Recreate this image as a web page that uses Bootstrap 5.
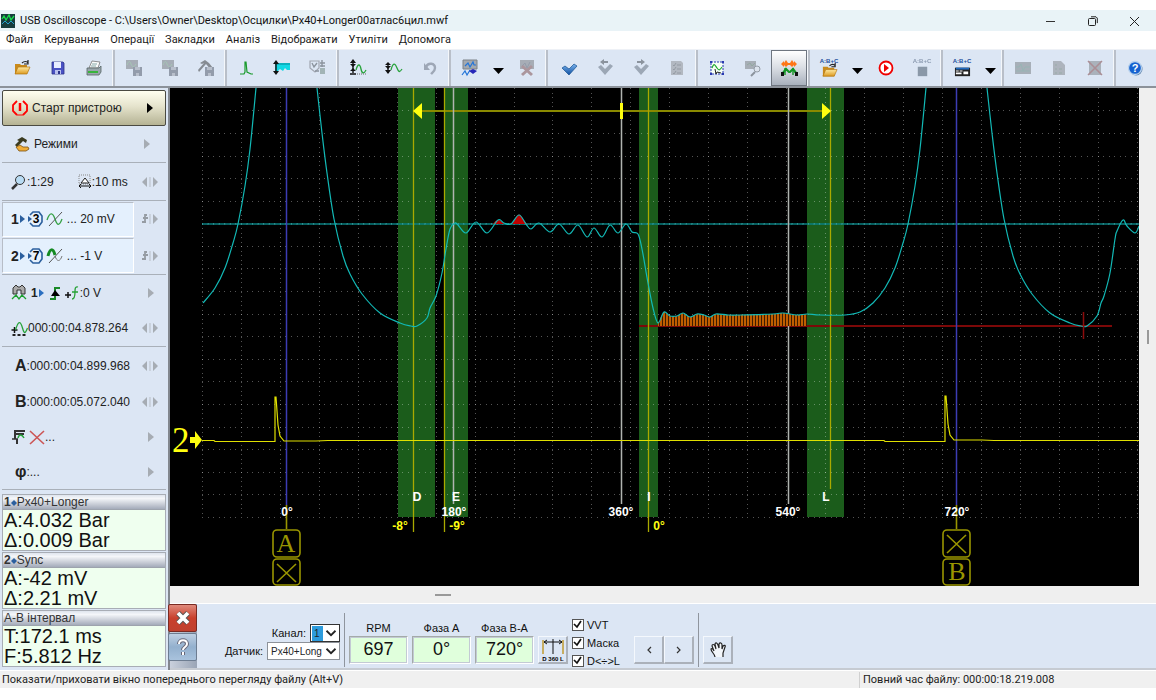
<!DOCTYPE html>
<html lang="uk">
<head>
<meta charset="utf-8">
<meta name="viewport" content="width=device-width, initial-scale=1">
<title>USB Oscilloscope</title>
<link href="https://cdn.jsdelivr.net/npm/bootstrap@5.3.0/dist/css/bootstrap.min.css" rel="stylesheet">
<style>
  :root { --panel:#dce6f4; --line:#a9b0b9; }
  body { background:#fff; color:#111; font-family:"Liberation Sans",sans-serif; font-size:12px; line-height:16px; padding-top:10px; }
  .ui-font { font-family:Roboto,"Noto Sans",sans-serif; }
  .titlebar { background:#e9f3f7; height:21px; font-size:11px; }
  .titlebar button { width:42px; height:21px; }
  .menubar { height:18px; font-size:11px; padding-left:6px; gap:11px; }
  .menubar a { color:#1b1b1b; text-decoration:none; }
  .flat { border:0; background:none; padding:0; }
  .tools { background:var(--panel); height:39px; border-top:1px solid #eef1f6; border-bottom:2px solid #8c929a; padding-left:4px; }
  .tools .tool { width:36px; height:36px; display:flex; align-items:center; justify-content:center; flex:none; }
  .tools .drop { width:21px; height:36px; display:flex; align-items:center; justify-content:center; padding-top:6px; flex:none; }
  .tools .split { width:4px; height:36px; flex:none; border-left:1px solid #f4f7fb; box-shadow:inset 2px 0 0 #b9bfc9; }
  .tools .split.wide { width:6px; }
  .tool.off { opacity:.5; filter:grayscale(.6); }
  .tool.pressed { border:1px solid #6f7680; background:linear-gradient(#fff,#d9dde3 50%,#a9b1bd); }
  .side { width:170px; flex:none; background:var(--panel); padding:2px 2px 0; border-right:2px solid #82878e; }
  .start { height:35px; border:1px solid #4a4a42; border-radius:2px; background:linear-gradient(#fffff0,#e5e3cc 45%,#b5b394); }
  .line-row { height:36px; padding-left:9px; padding-right:7px; display:flex; align-items:center; width:100%; color:#222; font-size:12px; text-align:left; }
  .line-row.tall { height:38px; }
  .line-row.input-row { height:37px; }
  .line-row.short { height:35px; }
  .line-row .end { margin-left:auto; }
  .line-row .tag { font-size:16px; font-weight:600; }
  .ruled { border-top:1px solid var(--line); }
  .foot-rule { height:5px; }
  .chan { background:#e4f0fd; border:1px solid #fff; border-top-color:#b7bdc7; border-left-color:#b7bdc7; width:132px; height:35px; padding-left:8px; display:flex; align-items:center; }
  .chan b { font-size:14px; }
  .meter { border:1px solid #a8adb5; margin-bottom:1px; background:#efffef; }
  .meter h2 { font-size:12px; line-height:14px; margin:0; color:#333; padding-left:1px; border-bottom:1px solid #9da3ad; background:linear-gradient(#dfe5ee,#f4f6f9 25%,#a4abba); }
  .meter p { margin:0; font-size:20px; line-height:20px; padding-left:1px; color:#111; }
  .strip { background:#efefef; }
  .vstrip { width:17px; flex:none; }
  .hstrip { height:18px; border-bottom:1px solid #fff; padding-left:265px; }
  .grip-h { width:16px; height:2px; background:#999; }
  .grip-v { width:2px; height:14px; background:#999; }
  .scope svg { display:block; width:100%; height:auto; background:#000; }
  .lower { background:var(--panel); height:66px; border-bottom:2px solid #c6cbd2; }
  .corner { width:27px; flex:none; background:linear-gradient(90deg,#c9d0dc,#9aa5b6); }
  .corner button { width:29px; height:28px; padding:0; display:flex; align-items:center; justify-content:center; border:1px solid #6d7d91; border-radius:2px; background:linear-gradient(#bfd0e2,#93b0ce 50%,#a9c3dd); margin-left:-2px; }
  .corner .stop { background:linear-gradient(#e08a7c,#c9402d 50%,#c0412f); border-color:#7a2a22; margin-bottom:1px; }
  .source { font-size:11px; width:135px; }
  .pick { width:auto; border:1px solid #8d9299; border-radius:0; font-size:10px; line-height:15px; height:18px; padding:0 14px 0 3px; background-color:#fff; background-size:12px 12px; background-position:right 2px center; background-image:url("data:image/svg+xml,%3csvg xmlns='http://www.w3.org/2000/svg' viewBox='0 0 16 16'%3e%3cpath fill='none' stroke='%23222' stroke-width='2.4' d='m2 5 6 6 6-6'/%3e%3c/svg%3e"); }
  .pick.narrow { width:30px; border-color:#333; background-image:linear-gradient(#2d9bdc,#2d9bdc),url("data:image/svg+xml,%3csvg xmlns='http://www.w3.org/2000/svg' viewBox='0 0 16 16'%3e%3cpath fill='none' stroke='%23222' stroke-width='2.4' d='m2 5 6 6 6-6'/%3e%3c/svg%3e"); background-size:11px 15px,12px 12px; background-position:1px center,right 2px center; background-repeat:no-repeat; }
  .pick.wide { width:73px; }
  .divide { width:1px; height:54px; background:#8f959e; flex:none; }
  .dial { width:59px; }
  .dial output { display:block; width:59px; height:28px; font-size:18px; line-height:25px; text-align:center; background:#e0ffdc; border:1px solid #a4aaa9; border-right-color:#fff; border-bottom-color:#fff; outline:1px solid #c3cad4; outline-offset:-2px; }
  .dial label { font-size:11px; line-height:15px; display:block; text-align:center; }
  .key { width:30px; height:28px; padding:0; flex:none; border:1px solid #f4f8fd; border-right:2px solid #abb1ba; border-bottom:2px solid #abb1ba; background:var(--panel); display:flex; align-items:center; justify-content:center; }
  .ticks { width:46px; }
  .ticks .form-check { min-height:0; height:18px; margin:0; padding:0; display:flex; align-items:center; gap:3px; font-size:11px; white-space:nowrap; }
  .ticks input.form-check-input { width:12px; height:12px; margin:0; float:none; border:1px solid #555; border-radius:0; background-color:#fff; flex:none; background-size:12px; background-image:url("data:image/svg+xml,%3csvg xmlns='http://www.w3.org/2000/svg' viewBox='0 0 12 12'%3e%3cpath fill='none' stroke='%23111' stroke-width='1.7' d='m2 5 3 3 4-6'/%3e%3c/svg%3e"); }
  .statusbar { background:#f0f0f0; height:17px; font-size:11px; color:#222; margin-top:1px; }
  .statusbar .message { padding-left:2px; }
  .statusbar .total { width:297px; border-left:1px solid #d0d0d0; padding-left:3px; }
</style>
</head>
<body>
<svg class="position-absolute" width="0" height="0">
  <defs>
    <linearGradient id="gold" x2="0" y2="1"><stop stop-color="#ffe9a0"/><stop offset="1" stop-color="#dc9a20"/></linearGradient>
    <linearGradient id="blue" x2="0" y2="1"><stop stop-color="#7bb4ee"/><stop offset="1" stop-color="#0d4ea0"/></linearGradient>
  </defs>
</svg>
<svg class="d-none">
  <symbol id="i-folder" viewBox="0 0 18 18"><path d="M2 5h5l1 1h6v9H2z" fill="#c98a1b"/><path d="M2 15l3-7h12l-3 7z" fill="url(#gold)" stroke="#b37712" stroke-width=".7"/><path d="M9 4c2-2 5-2 6 0M15 1v4h-4" fill="none" stroke="#222" stroke-width="1.2"/></symbol>
  <symbol id="i-disk" viewBox="0 0 18 18"><path d="M3 3h11l1 1v11H3z" fill="#4a52c4" stroke="#2d348a" stroke-width=".8"/><path d="M5 3h7v6H5z" fill="#e8edff"/><path d="M6 11h6v4H6z" fill="#b9c1ee"/><path d="M9 12h2v3H9z" fill="#2d348a"/></symbol>
  <symbol id="i-print" viewBox="0 0 18 18"><path d="M7 2l8 1-2 6H4z" fill="#fafafa" stroke="#777" stroke-width=".8"/><path d="M7 5h5M6 7h5" stroke="#8aa"/><path d="M2 9h12l2-2v6l-2 3H2z" fill="#9aa6ac" stroke="#566" stroke-width=".8"/><path d="M3 12h10v2H3z" fill="#37b43c"/></symbol>
  <symbol id="i-savesig" viewBox="0 0 18 18"><path d="M1 1h12v9H1z" fill="#6b7680"/><path d="M2 6c2-5 3-4 4-1s3 4 5 0" fill="none" stroke="#3aba49"/><path d="M8 8h9v9H8z" fill="#43557f"/><path d="M10 8h5v3h-5zM11 14h3v3h-3z" fill="#8f9bb0"/></symbol>
  <symbol id="i-savehammer" viewBox="0 0 18 18"><path d="M3 4l5-3 4 3 4 5-2 2-5-6-7 8-1-2 6-7-2 1z" fill="#333"/><path d="M8 8h9v9H8z" fill="#43557f"/><path d="M10 8h5v3h-5zM11 14h3v3h-3z" fill="#8f9bb0"/></symbol>
  <symbol id="i-spike" viewBox="0 0 18 18"><path d="M3 15h4l1-2V3h1l1 10 2 1 2 1h2" fill="none" stroke="#189a2b" stroke-width="1.2"/></symbol>
  <symbol id="i-level" viewBox="0 0 18 18"><path d="M2 4h15v7h-3l-2-2-2 3-3-2-2 2H2z" fill="#12d8e4"/><path d="M2 5h15" stroke="#078a99"/><path d="M3 4v9" stroke="#111" stroke-width="1.4"/><path d="M3 1l3 4H0zM3 16l3-4H0z" fill="#111"/></symbol>
  <symbol id="i-volt" viewBox="0 0 18 18"><path d="M1 2h9v7l-4 4-5-4z" fill="none" stroke="#667" stroke-width="1.2"/><path d="M3 4l2 4 3-4M6 12h4M13 1v7M11 4h5M11 7h5" fill="none" stroke="#345" stroke-width="1.4"/><path d="M11 9h5v6h-5z" fill="#4b8c75"/></symbol>
  <symbol id="i-amp" viewBox="0 0 18 18"><path d="M4 3v11M1 15h6" stroke="#111" stroke-width="1.4"/><path d="M4 0l3 4H1zM4 8L1 5h6zM4 9l3 3H1z" fill="#111"/><path d="M7 11c2-7 4-6 5-1s3 5 5 1" fill="none" stroke="#27a33b" stroke-width="1.3"/><path d="M8 15h9" stroke="#666" stroke-dasharray="1 1"/></symbol>
  <symbol id="i-amp2" viewBox="0 0 18 18"><path d="M3 4v10" stroke="#111" stroke-width="1.4"/><path d="M3 3l3 3H0zM3 10L0 7h6zM3 15l3-4H0z" fill="#111"/><path d="M6 11c2-8 4-7 6-2s3 4 5 1" fill="none" stroke="#27a33b" stroke-width="1.3"/></symbol>
  <symbol id="i-undo" viewBox="0 0 18 18"><path d="M5 8c2-5 9-4 9 1 0 3-2 4-4 6" fill="none" stroke="#556b92" stroke-width="2.4"/><path d="M3 4v7h6z" fill="#556b92"/></symbol>
  <symbol id="i-scr" viewBox="0 0 18 18"><path d="M2 1h14v9H2z" fill="#a4a9af" stroke="#7d8288"/><path d="M4 7l3-3 2 4 3-5 1 3h2M1 16l3-4 2 4 3-5" fill="none" stroke="#2475d8" stroke-width="1.2"/><path d="M8 12l4-2 4 2-4 3z" fill="#2727b8"/></symbol>
  <symbol id="i-scrx" viewBox="0 0 18 18"><path d="M2 1h14v9H2z" fill="#70777f"/><path d="M4 7l3-3 2 5 3-6" fill="none" stroke="#457"/><path d="M4 7l10 9M14 7L4 16" stroke="#b93838" stroke-width="3"/></symbol>
  <symbol id="i-check" viewBox="0 0 18 18"><path d="M2 9l3-2 4 3 5-5 3 2-8 9z" fill="url(#blue)" stroke="#15508f" stroke-width=".7"/></symbol>
  <symbol id="i-checkl" viewBox="0 0 18 18"><path d="M2 8l3-2 4 4 5-5 3 2-8 9z" fill="#4d6b8e"/><path d="M4 3l4-3v2h4v2H8v2z" fill="#345"/></symbol>
  <symbol id="i-checkr" viewBox="0 0 18 18"><path d="M2 8l3-2 4 4 5-5 3 2-8 9z" fill="#4d6b8e"/><path d="M13 3L9 0v2H5v2h4v2z" fill="#345"/></symbol>
  <symbol id="i-list" viewBox="0 0 18 18"><path d="M3 2h10l2 2v12H3z" fill="#858c94"/><path d="M5 6l1 1 2-3M9 6h4M5 10l1 1 2-3M9 10h4M5 14l1 1 2-3M9 14h4" fill="none" stroke="#48525e"/></symbol>
  <symbol id="i-select" viewBox="0 0 18 18"><path d="M3 3h12v12H3z" fill="#f6fff6" stroke="#2938b0" stroke-dasharray="2 1"/><path d="M2 2h2v2H2zM14 2h2v2h-2zM2 14h2v2H2zM14 14h2v2h-2z" fill="#2938b0"/><path d="M4 9c2-6 3-3 5 0s3 2 5-1" fill="none" stroke="#20a830" stroke-width="1.2"/><path d="M7 10l1 5 1-2 4 1" fill="none" stroke="#222"/></symbol>
  <symbol id="i-scrzoom" viewBox="0 0 18 18"><path d="M1 2h11v8H1z" fill="#6f7880"/><path d="M3 6l3-2 2 3 3-3" stroke="#287a35" fill="none"/><circle cx="13" cy="10" r="3" fill="#d5e2f0" stroke="#456"/><path d="M11 13l-4 4" stroke="#345" stroke-width="2"/></symbol>
  <symbol id="i-find" viewBox="0 0 18 18"><path d="M1 5l3-3v2l2-3 2 3h2l2-3 2 3V2l3 3-3 3V6l-2 2-2-2H8L6 8 4 6v2z" fill="#ff7616"/><path d="M3 14l3-4 3 3h1l3-3 3 4" fill="none" stroke="#159526" stroke-width="2.2"/><path d="M5 9v7M13 9v7" stroke="#159526" stroke-width="1.4"/><path d="M1 13h3v4H1zM15 13h3v4h-3z" fill="#111"/></symbol>
  <symbol id="i-stop" viewBox="0 0 18 18"><path d="M4 5h10v10H4z" fill="#22517f"/></symbol>
  <symbol id="i-play" viewBox="0 0 18 18"><circle cx="9" cy="9" r="6.5" fill="#fff" stroke="#f00000" stroke-width="1.8"/><path d="M7 5l5 4-5 4z" fill="#f00000"/></symbol>
  <symbol id="i-form" viewBox="0 0 18 18"><path d="M1 6h16v9H1z" fill="#222"/><path d="M2 6h14v2H2z" fill="#236bc0"/><path d="M2 9h3v1H2zM6 9h3v1H6zM2 11h6v2H2zM10 10h5v3h-5z" fill="#fff"/></symbol>
  <symbol id="i-graph" viewBox="0 0 18 18"><path d="M1 3h16v12H1z" fill="#6c7b83"/><path d="M2 8h3l2-3 2 7 2-4h5M2 12h14" fill="none" stroke="#1e9572"/></symbol>
  <symbol id="i-doc" viewBox="0 0 18 18"><path d="M3 2h8l4 4v10H3z" fill="#7b858e"/><path d="M5 6h2M5 10h2M5 14h2M9 10h3M9 14h3" stroke="#3b7f51"/></symbol>
  <symbol id="i-docx" viewBox="0 0 18 18"><path d="M3 2h12v14H3z" fill="#74808b"/><path d="M2 2l14 14M16 2L2 16" stroke="#c22" stroke-width="1.5"/></symbol>
  <symbol id="i-help" viewBox="0 0 18 18"><circle cx="10" cy="10" r="6.5" fill="#5c80a8"/><circle cx="9" cy="9" r="6.5" fill="#1562d0" stroke="#b8d2ee" stroke-width="1.3"/><text x="9" y="13" font-size="11" font-weight="bold" fill="#fff" text-anchor="middle">?</text></symbol>
  <symbol id="i-ham" viewBox="0 0 16 16"><path d="M3 4l5-3 5 3-1 3-3-2-6 6-2-2 4-4z" fill="#3b3b20"/><path d="M2 11l4-2 3 2h5l1 2-3 2H5z" fill="#f0ad37" stroke="#795013" stroke-width=".8"/></symbol>
  <symbol id="i-lr" viewBox="0 0 18 12"><path d="M6 1v10L1 6zM12 1v10l5-5z" fill="#a6acb3"/><path d="M9 1v10" stroke="#b7bdc5"/></symbol>
  <symbol id="i-fr" viewBox="0 0 18 12"><path d="M6 2H4v8M2 5h5M1 9h4" fill="none" stroke="#969ca3" stroke-width="1.8"/><path d="M12 1v10l5-5z" fill="#a6acb3"/><path d="M9 1v10" stroke="#b7bdc5"/></symbol>
  <symbol id="i-r" viewBox="0 0 8 12"><path d="M1 1v10l6-5z" fill="#a6acb3"/></symbol>
  <symbol id="i-port" viewBox="0 0 24 18"><path d="M1 5v8l5-4z" fill="#2b5f9e"/><path d="M9 6v6l4-3z" fill="#2b5f9e"/><path d="M11 5l3-3h6l3 4v6l-3 4h-6l-3-3" fill="none" stroke="#2b5f9e" stroke-width="1.6"/></symbol>
</svg>

<header>
  <div class="titlebar ui-font d-flex align-items-center">
    <svg class="me-1" width="16" height="14" viewBox="0 0 16 14"><path d="M1 0h14v14H1z" fill="#173c3d"/><path d="M2 5l2-3 2 4 3-5 2 5 3-4" fill="none" stroke="#19e04b" stroke-width="1.3"/><path d="M2 10l3-3 3 3 3-3 3 3" fill="none" stroke="#22a0d0"/></svg>
    <span>USB Oscilloscope - C:\Users\Owner\Desktop\Осцилки\Px40+Longer00атлас6цил.mwf</span>
    <div class="ms-auto d-flex">
      <button class="flat" aria-label="Minimize"><svg width="10" height="10" viewBox="0 0 10 10"><path d="M0 5.500h9" stroke="#333"/></svg></button>
      <button class="flat" aria-label="Restore"><svg width="10" height="10" viewBox="0 0 10 10" fill="none" stroke="#222"><rect x=".5" y="2.500" width="7" height="7" rx="1"/><path d="M3 .8h5l1.300 1.300v5"/></svg></button>
      <button class="flat" aria-label="Close"><svg width="10" height="10" viewBox="0 0 10 10"><path d="M0 1l9 9M9 1L0 10" stroke="#222"/></svg></button>
    </div>
  </div>
  <nav class="menubar ui-font d-flex align-items-center">
    <a href="#">Файл</a><a href="#">Керування</a><a href="#">Операції</a><a href="#">Закладки</a><a href="#">Аналіз</a><a href="#">Відображати</a><a href="#">Утиліти</a><a href="#">Допомога</a>
  </nav>
  <div class="tools d-flex" id="tools"></div>
</header>

<main class="d-flex">
  <aside class="side">
    <button class="start line-row"><svg class="me-1" width="16" height="16" viewBox="0 0 16 16" fill="none" stroke="#f00" stroke-width="1.800"><path d="M5 1L1 5v6l4 4M11 1l4 4v6l-4 4"/><path d="M8 3v8" stroke-width="2.500"/><path d="M5 15h6" stroke-width="1"/></svg><span>Старт пристрою</span><svg class="end me-1" width="8" height="12" viewBox="0 0 8 12"><path d="M1 1v10l6-5z"/></svg></button>
    <button class="flat line-row ps-2"><svg class="mx-1" width="16" height="16"><use href="#i-ham"/></svg><span>Режими</span><svg class="end me-2" width="8" height="12"><use href="#i-r"/></svg></button>
    <div class="line-row tall ruled"><svg width="16" height="16" viewBox="0 0 16 16"><circle cx="9" cy="6" r="4.500" fill="#b9dcf4" stroke="#333"/><path d="M6 10l-5 5" stroke="#333" stroke-width="2.500"/></svg><span>:1:29</span><svg class="ms-4" width="14" height="15" viewBox="0 0 14 15"><path d="M1 1h11v9H1z" fill="none" stroke="#888" stroke-dasharray="1 1"/><path d="M3 9l4-5 4 5z" fill="#fff" stroke="#222"/><path d="M1 12h12M3 10l-2 2 2 2M11 10l2 2-2 2" fill="none" stroke="#111"/></svg><span>:10 ms</span><svg class="end" width="18" height="12"><use href="#i-lr"/></svg></div>
    <div class="line-row input-row ruled ps-0"><div class="chan"><b>1</b><svg width="48" height="18" viewBox="0 0 48 18"><use href="#i-port" width="24" height="18"/><text x="17" y="13" text-anchor="middle" font-size="12" font-weight="bold">3</text><path d="M28 10c3-9 6-7 8-1s4 8 7 0" fill="none" stroke="#35a045" stroke-width="1.300"/><path d="M43 2L30 16" stroke="#555"/></svg><span>... 20 mV</span></div><svg class="end" width="18" height="12"><use href="#i-fr"/></svg></div>
    <div class="line-row input-row ps-0"><div class="chan"><b>2</b><svg width="48" height="18" viewBox="0 0 48 18"><use href="#i-port" width="24" height="18"/><text x="17" y="13" text-anchor="middle" font-size="12" font-weight="bold">7</text><path d="M29 9c2-8 5-8 7-1" fill="none" stroke="#148a22" stroke-width="3"/><path d="M36 9c2 6 5 6 7 0" fill="none" stroke="#777"/><path d="M43 2L30 16" stroke="#555"/></svg><span>... -1 V</span></div><svg class="end" width="18" height="12"><use href="#i-fr"/></svg></div>
    <div class="line-row ruled"><svg class="me-1" width="16" height="18" viewBox="0 0 16 18"><path d="M2 10V4l3-3 2 2h2l2-2 3 3v6h-4V6H6v4z" fill="#aaa" stroke="#333"/><path d="M1 15l4-4 3 4 3-4 4 4" fill="none" stroke="#1da031" stroke-width="1.300"/></svg><b>1</b><svg width="42" height="18" viewBox="0 0 42 18"><path d="M1 5v8l5-4z" fill="#2b6fc0"/><path d="M12 15h5V4h5" fill="none" stroke="#1a8a28" stroke-width="2"/><path d="M13 12l4-6 5 6z"/><path d="M27 11h6M30 8v6" stroke="#111" stroke-width="1.500"/><path d="M40 3c-3-1-3 2-3 5s0 7-3 7M34 8h6" fill="none" stroke="#26a236" stroke-width="1.300"/></svg><span>:0 V</span><svg class="end me-1" width="8" height="12"><use href="#i-r"/></svg></div>
    <div class="line-row"><svg class="flex-shrink-0" width="17" height="17" viewBox="0 0 16 17"><path d="M3 7v6M0 10h6" stroke="#111" stroke-width="1.500"/><path d="M4 10c3-10 5-9 7-2s3 5 5 0" fill="none" stroke="#27a33b" stroke-width="1.300"/><path d="M1 15h14" stroke="#222" stroke-width="2" stroke-dasharray="3 2"/></svg><span>000:00:04.878.264</span><svg class="end" width="18" height="12"><use href="#i-lr"/></svg></div>
    <div class="line-row tall ruled"><span class="tag ps-1">A</span><span>:000:00:04.899.968</span><svg class="end" width="18" height="12"><use href="#i-lr"/></svg></div>
    <div class="line-row short"><span class="tag ps-1">B</span><span>:000:00:05.072.040</span><svg class="end" width="18" height="12"><use href="#i-lr"/></svg></div>
    <div class="line-row short"><svg width="34" height="16" viewBox="0 0 34 16"><path d="M3 2h11M4 1v9M4 5h9M6 10v5" stroke="#333" stroke-width="2"/><path d="M1 10h6" stroke="#333" stroke-width="1.500"/><path d="M7 9c1-4 4-4 6 0" fill="none" stroke="#27a33b" stroke-width="1.500"/><path d="M19 2l14 13M33 2L19 15" stroke="#c55" stroke-width="1.600"/></svg><span>...</span><svg class="end me-1" width="8" height="12"><use href="#i-r"/></svg></div>
    <div class="line-row short"><span class="tag ps-1">φ</span><span>:...</span><svg class="end me-1" width="8" height="12"><use href="#i-r"/></svg></div>
    <div class="ruled foot-rule"></div>
    <section class="meter"><h2><b>1</b><svg width="6" height="8" viewBox="0 0 6 8"><path d="M0 4l3-3 3 3-3 3z" fill="#2b5f9e"/></svg>Px40+Longer</h2><p>A:4.032 Bar</p><p>Δ:0.009 Bar</p></section>
    <section class="meter"><h2><b>2</b><svg width="6" height="8" viewBox="0 0 6 8"><path d="M0 4l3-3 3 3-3 3z" fill="#2b5f9e"/></svg>Sync</h2><p>A:-42 mV</p><p>Δ:2.21 mV</p></section>
    <section class="meter"><h2>A-B інтервал</h2><p>T:172.1 ms</p><p>F:5.812 Hz</p></section>
  </aside>

  <div class="flex-grow-1 d-flex flex-column">
    <div class="d-flex">
      <div class="scope flex-grow-1">
        <svg viewBox="170 88 969 498" font-family="Liberation Sans, sans-serif" font-weight="bold" font-size="12">
          <defs><pattern id="hatch" width="3" height="4" patternUnits="userSpaceOnUse"><path d="M0 0h3v4H0z" fill="#3e1c00"/><path d="M0 0h2v4H0z" fill="#c05e00"/></pattern></defs>
          <g fill="#1b5c1b"><path d="M398 88h37v429h-37zM444 88h24v429h-24zM639 88h19v429h-19zM807 88h37v429h-37z"/></g>
          <g id="grid" stroke="#fff" stroke-opacity=".33" shape-rendering="crispEdges"></g>
          <path d="M202 224h937" stroke="#0a7f80" stroke-width="1.500"/><path d="M202 224h937" stroke="#4db0b0" stroke-dasharray="1 4.560"/>
          <path d="M413 111h417" stroke="#8a8a00" stroke-width="2"/>
          <path d="M639 326h473" stroke="#7c0808" stroke-width="2"/>
          <path d="M286.500 88v417M956.500 88v417" stroke="#3c3cb4" stroke-width="1.500"/>
          <path d="M453.500 88v416M621.500 88v416M788.500 88v416" stroke="#b0b4b0" stroke-width="1.500"/>
          <path d="M413.500 88v444M444.500 88v444M648.500 88v444M830.500 88v401" stroke="#a9a900" stroke-width="1.300"/>
          <path id="area" fill="url(#hatch)"/>
          <path d="M493 224q5-8 11 0zM511 224q2 0 4-5 4-9 8 0l4 5z" fill="#c00000"/>
          <g id="trace" fill="none" stroke="#12b9b6" stroke-width="1.200"></g>
          <path d="M202 440.500h12l1 1h60V397h1l2 28 2 11 4 5h32l12-.5H884l1 1h60V396h1l2 28 2 11 4 5h28l12 .5h145" fill="none" stroke="#e0e000" stroke-width="1.200"/>
          <path d="M1083.500 312v27" stroke="#8c0c0c" stroke-width="1.500"/>
          <path d="M413 111l9-8v16zM831 111l-9-8v16zM620 103h3v16h-3zM190 437h5v-6l7 9-7 9v-6h-5z" fill="#ffff10"/>
          <text x="172" y="452" font-family="Liberation Serif" font-weight="normal" font-size="35" fill="#ffff10">2</text>
          <g fill="none" stroke="#999500" stroke-width="1.600"><path d="M286.500 505v24M956.500 505v24M277 564l19 18M296 564l-19 18M947 535l19 18M966 535l-19 18"/><rect x="273" y="530" width="27" height="27" rx="4"/><rect x="273" y="559" width="27" height="26" rx="4"/><rect x="943" y="530" width="27" height="27" rx="4"/><rect x="943" y="559" width="27" height="26" rx="4"/></g>
          <g font-family="Liberation Serif" font-weight="normal" font-size="26" fill="#999500" text-anchor="middle"><text x="286" y="552">A</text><text x="957" y="580">B</text></g>
          <g fill="#fff" text-anchor="middle"><text x="287" y="516">0°</text><text x="454" y="516">180°</text><text x="621" y="516">360°</text><text x="788" y="516">540°</text><text x="957" y="516">720°</text><text x="417" y="501">D</text><text x="456" y="501">E</text><text x="649" y="501">I</text><text x="826" y="501">L</text></g>
          <g fill="#ffff10" text-anchor="middle"><text x="400" y="530">-8°</text><text x="457" y="530">-9°</text><text x="659" y="530">0°</text></g>
        </svg>
      </div>
      <div class="strip vstrip d-flex align-items-center justify-content-center"><div class="grip-v"></div></div>
    </div>
    <div class="strip hstrip d-flex align-items-center"><div class="grip-h"></div></div>
    <form class="lower d-flex">
      <div class="corner">
        <button type="button" class="stop" aria-label="Закрити"><svg width="16" height="16" viewBox="0 0 16 16"><path d="M3 3l10 10M13 3L3 13" stroke="#555" stroke-width="5.500"/><path d="M3 3l10 10M13 3L3 13" stroke="#fff" stroke-width="3.800"/></svg></button>
        <button type="button" aria-label="Довідка"><svg width="16" height="18" viewBox="0 0 16 18"><path d="M4 6c0-5 8-5 8 0 0 3-4 3-4 6M8 14v3" fill="none" stroke="#667" stroke-width="4"/><path d="M4 6c0-5 8-5 8 0 0 3-4 3-4 6M8 14v3" fill="none" stroke="#fff" stroke-width="2"/></svg></button>
      </div>
      <div class="source d-flex flex-column align-items-end justify-content-center ms-2 pt-3 pb-1">
        <div class="d-flex align-items-center gap-1"><label for="chan">Канал:</label><select id="chan" class="form-select pick narrow"><option>1</option></select></div>
        <div class="d-flex align-items-center gap-1"><label for="sens">Датчик:</label><select id="sens" class="form-select pick wide"><option>Px40+Long</option></select></div>
      </div>
      <div class="divide align-self-center ms-1 me-1 mt-2"></div>
      <div class="d-flex align-items-end gap-1 pb-1">
        <div class="dial"><label for="rpm">RPM</label><output id="rpm">697</output></div>
        <div class="dial"><label for="pa">Фаза A</label><output id="pa">0°</output></div>
        <div class="dial"><label for="pb">Фаза B-A</label><output id="pb">720°</output></div>
        <button type="button" class="key" aria-label="D 360 L"><svg width="24" height="24" viewBox="0 0 24 24"><path d="M2 2v14M22 2v14" stroke="#c09a30" stroke-width="1.500"/><path d="M12 1v15M3 4h18M6 2L3 4l3 2M18 2l3 2-3 2" fill="none" stroke="#111"/><text x="12" y="23" text-anchor="middle" font-size="6" font-weight="bold">D 360 L</text></svg></button>
      </div>
      <div class="ticks ms-1 pt-2 mt-1">
        <div class="form-check"><input class="form-check-input" type="checkbox" id="c1" checked><label for="c1">VVT</label></div>
        <div class="form-check"><input class="form-check-input" type="checkbox" id="c2" checked><label for="c2">Маска</label></div>
        <div class="form-check"><input class="form-check-input" type="checkbox" id="c3" checked><label for="c3">D&lt;÷&gt;L</label></div>
      </div>
      <div class="d-flex align-items-end pb-1 ms-3">
        <button type="button" class="key" aria-label="Назад"><svg width="6" height="8" viewBox="0 0 6 8"><path d="M5 1L2 4l3 3" fill="none" stroke="#333" stroke-width="1.200"/></svg></button>
        <button type="button" class="key" aria-label="Далі"><svg width="6" height="8" viewBox="0 0 6 8"><path d="M1 1l3 3-3 3" fill="none" stroke="#333" stroke-width="1.200"/></svg></button>
      </div>
      <div class="divide align-self-center ms-1 me-1 mt-2"></div>
      <div class="d-flex align-items-end pb-1">
        <button type="button" class="key" aria-label="Рука"><svg width="18" height="18" viewBox="0 0 18 18"><path d="M6 16c0-3-4-5-4-8 1-1 2 0 3 2L3 5c0-2 2-2 3 0l1 3-1-5c1-2 2-1 3 1l1 3V3c1-2 3-1 3 1v4l1-3c1-1 3-1 2 1l-2 6v4" fill="#f3f6fa" stroke="#222" stroke-width="1.200"/></svg></button>
      </div>
    </form>
  </div>
</main>
<footer class="statusbar ui-font d-flex align-items-center">
  <div class="flex-grow-1 message">Показати/приховати вікно попереднього перегляду файлу (Alt+V)</div>
  <div class="total">Повний час файлу: 000:00:18.219.008</div>
</footer>

<script src="https://cdn.jsdelivr.net/npm/bootstrap@5.3.0/dist/js/bootstrap.bundle.min.js"></script>
<script>
  // Toolbar: name, or "|" for a split, "v" for a drop arrow; "-" prefix = disabled, "*" = pressed, "#" = formula caption above
  const items = 'folder disk print | -savesig -savesig -savehammer | spike level -volt | amp amp2 -undo | scr v -scrx || check -checkl -checkr -list | select -scrzoom *find | #folder v play -#stop | #form v | -graph -doc -docx | help'.split(' ');
  document.getElementById('tools').innerHTML = items.map(t => {
    if (t[0] === '|') return `<span class="split${t.length > 1 ? ' wide' : ''}"></span>`;
    if (t === 'v') return '<button class="flat drop" aria-label="menu"><svg width="11" height="6" viewBox="0 0 11 6"><path d="M0 0h11L5.500 6z"/></svg></button>';
    const off = t[0] === '-', on = t[0] === '*', cap = t.includes('#'), name = t.replace(/[-*#]/g, '');
    const art = cap
      ? `<svg width="20" height="24" viewBox="0 0 20 24"><text x="10" y="7" text-anchor="middle" font-size="6" font-weight="bold" fill="#1c4f9c">A:B+C</text><use href="#i-${name}" x="2" y="6" width="17" height="17"/></svg>`
      : `<svg width="18" height="18"><use href="#i-${name}"/></svg>`;
    return `<button class="flat tool${off ? ' off' : ''}${on ? ' pressed' : ''}" aria-label="${name}">${art}</button>`;
  }).join('');

  // Dotted graticule: 24 columns, 18 rows
  let g = '';
  for (let i = 0; i <= 24; i++) { const x = 202.5 + i * 38.94; g += `<path d="M${x} 88.300V517" stroke-dasharray="1 3.516"/>`; }
  for (let i = 0; i <= 18; i++) { const y = 110.9 + i * 22.58; g += `<path d="M202 ${y}H1139" stroke-dasharray="1 4.563"/>`; }
  document.getElementById('grid').innerHTML = g;

  // Smooth curve through the sampled pressure points
  const smooth = p => p.reduce((d, c, i) => {
    if (!i) return `M${c[0]} ${c[1]}`;
    const a = p[i - 2] || p[i - 1], b = p[i - 1], e = p[i + 1] || c;
    return d + `C${b[0] + (c[0] - a[0]) / 6} ${b[1] + (c[1] - a[1]) / 6} ${c[0] - (e[0] - b[0]) / 6} ${c[1] - (e[1] - b[1]) / 6} ${c[0]} ${c[1]}`;
  }, '');
  const rise = [[203,303],[215,288],[225,268],[233,243],[238,224],[245,186],[250,149],[256,88]];
  const fall = [[317,88],[322,133],[327,173],[334,219],[343,256],[350,274],[362,294],[380,313],[400,323],[411,326],[417,326]];
  const tail = [[658,323],[664,312],[670,316],[677,316],[683,313],[690,317],[697,314],[704,315],[710,317],[716,314],[728,315],[740,315],[773,314],[783,313],[797,315],[807,314]];
  const mid = [[427,318],[430,308],[436,296],[442,273],[446,249],[450,229],[455,223],[458,225],[466,233],[476,222],[487,233],[498,220],[504,223],[511,224],[519,215],[526,224],[531,229],[539,223],[550,232],[559,224],[569,234],[578,225],[587,237],[594,228],[602,237],[610,225],[618,233],[626,224],[632,232],[638,234],[642,249],[648,283],[653,308]];
  const shift = p => p.map(([x, y]) => [x + 670, y]);
  const last = [[1097,316],[1101,303],[1104,296],[1110,273],[1115,239],[1117,231],[1123,220],[1127,226],[1135,233],[1139,226]];
  const runs = [rise, [...fall, ...mid, ...tail, [820,315],[845,315],[860,312], ...shift(rise)], [...shift(fall), ...last]];
  document.getElementById('trace').innerHTML = runs.map(r => `<path d="${smooth(r)}"/>`).join('');
  document.getElementById('area').setAttribute('d', smooth(tail) + 'V326H658z');
</script>
</body>
</html>
